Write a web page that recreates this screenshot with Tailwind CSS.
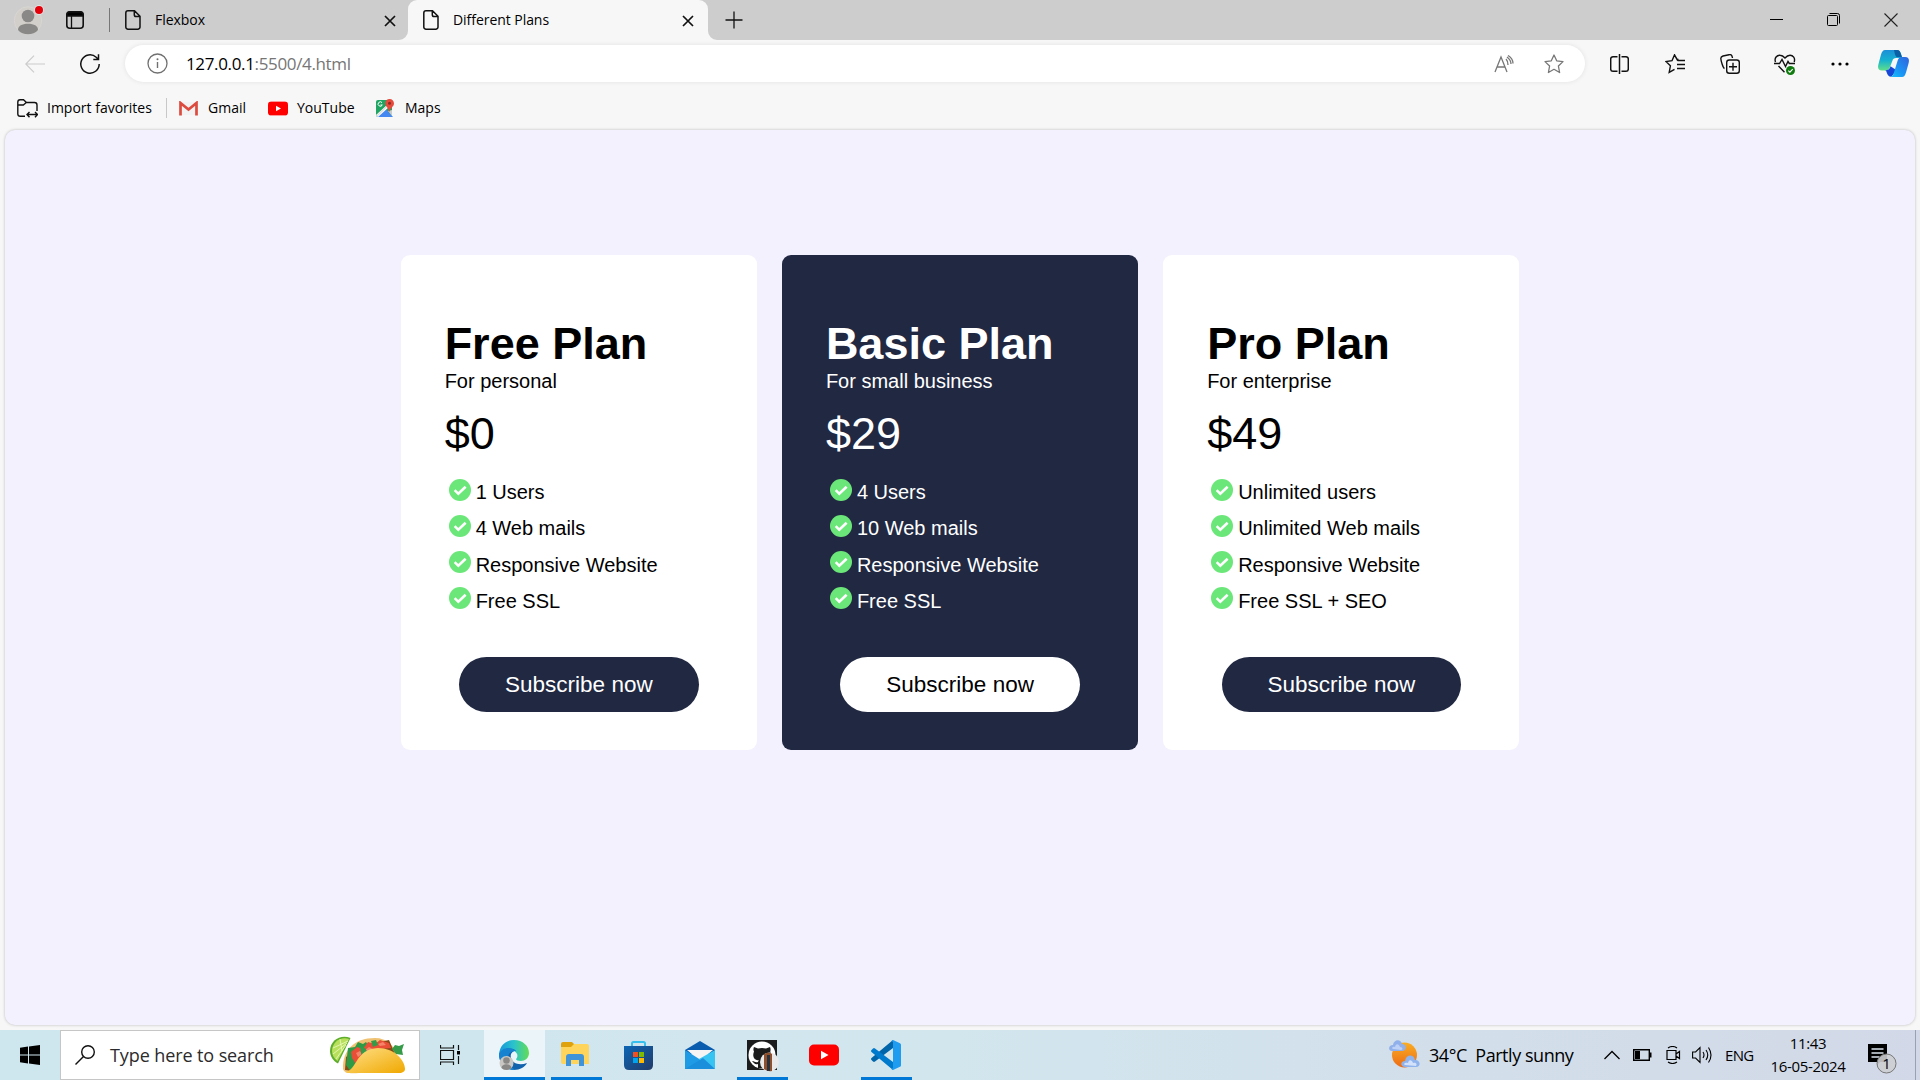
<!DOCTYPE html>
<html lang="en">
<head>
<meta charset="utf-8">
<title>Different Plans</title>
<script src="https://cdn.jsdelivr.net/npm/@tailwindcss/browser@4"></script>
</head>
<body class="w-[1920px] h-[1080px] overflow-hidden flex flex-col bg-[#f7f7f7] text-black font-['Open_Sans',sans-serif]">
<svg class="hidden">
  <symbol id="page" viewBox="0 0 16 20"><path d="M3 .8h6.5L15 6.3V17a2.200 2.200 0 0 1-2.200 2.200H3A2.200 2.200 0 0 1 .8 17V3A2.200 2.200 0 0 1 3 .8zM9.300 1v3.700a1.800 1.800 0 0 0 1.800 1.800H15" fill="none" stroke="#111" stroke-width="1.500"/></symbol>
  <symbol id="x" viewBox="0 0 12 12"><path d="M1 1l10 10M11 1L1 11" stroke="#111" stroke-width="1.700" fill="none"/></symbol>
  <symbol id="yt" viewBox="0 0 30 22"><rect y=".5" width="30" height="21" rx="5" fill="#f00"/><path d="M12 6.800v8.400l7.500-4.200z" fill="#fff"/></symbol>
  <symbol id="check" viewBox="0 0 22 22"><circle cx="11" cy="11" r="11" fill="#6be779"/><path d="M5.700 11.200l3.600 3.600 7.300-7" fill="none" stroke="#fff" stroke-width="2.600"/></symbol>
</svg>

<!-- Tab strip -->
<header class="h-10 shrink-0 flex items-center bg-[#cdcdcd] text-[14px]">
  <svg class="ml-3.5 w-[30px] h-[30px]" viewBox="0 0 30 30"><circle cx="14" cy="15.500" r="13.700" fill="#d2cfca" stroke="#dedcd8" stroke-width=".6"/><circle cx="14" cy="11" r="6.300" fill="#8a8886"/><path d="M4 25c0-4 4-6.200 10-6.200S24 21 24 25c-2.500 3-6 4.200-10 4.200S6.500 28 4 25z" fill="#8a8886"/><circle cx="25" cy="5" r="4.800" fill="#e8e8e8"/><circle cx="25" cy="5" r="4" fill="#e3000b"/></svg>
  <svg class="ml-[22px] w-[18px] h-[18px]" viewBox="0 0 18 18"><rect x=".8" y=".8" width="16.400" height="16.400" rx="3" fill="none" stroke="#111" stroke-width="1.600"/><path d="M1 5V3.500A2.500 2.500 0 0 1 3.500 1h11A2.500 2.500 0 0 1 17 3.500V5zM5.500 5v12" stroke="#111" stroke-width="1.300"/></svg>
  <div class="ml-[25px] w-px h-6 bg-[#777]"></div>
  <div class="ml-[15px] w-[283px] flex items-center">
    <svg class="w-4 h-5"><use href="#page"/></svg>
    <span class="ml-[14px] pb-0.5 tracking-[-0.05px]">Flexbox</span>
    <svg class="ml-auto mr-[12px] w-3 h-3 translate-y-px"><use href="#x"/></svg>
  </div>
  <div class="relative w-[300px] h-10 bg-[#f7f7f7] rounded-t-[9px] flex items-center">
    <svg class="absolute -left-[9px] bottom-0 w-[9px] h-[9px]" viewBox="0 0 9 9"><path d="M9 0v9H0A9 9 0 0 0 9 0z" fill="#f7f7f7"/></svg>
    <svg class="absolute -right-[9px] bottom-0 w-[9px] h-[9px]" viewBox="0 0 9 9"><path d="M0 0v9h9A9 9 0 0 1 0 0z" fill="#f7f7f7"/></svg>
    <svg class="ml-[15px] w-4 h-5"><use href="#page"/></svg>
    <span class="ml-[14px] pb-0.5 tracking-[-0.05px]">Different Plans</span>
    <svg class="ml-auto mr-[14px] w-3 h-3 translate-y-px"><use href="#x"/></svg>
  </div>
  <svg class="ml-[17px] w-[18px] h-[18px]" viewBox="0 0 18 18"><path d="M9 .5v17M.5 9h17" stroke="#111" stroke-width="1.300"/></svg>
  <div class="ml-auto mr-[22px] pb-px flex items-center gap-11">
    <svg class="w-[13px] h-[13px]" viewBox="0 0 13 13"><path d="M0 6.500h13" stroke="#000"/></svg>
    <svg class="w-[13px] h-[13px]" viewBox="0 0 13 13"><rect x=".5" y="2.500" width="10" height="10" rx="1" fill="none" stroke="#000"/><path d="M2.500 .5h8a2 2 0 0 1 2 2v8" fill="none" stroke="#000"/></svg>
    <svg class="w-[14px] h-[14px]" viewBox="0 0 14 14"><path d="M.5 .5l13 13M13.500 .5l-13 13" stroke="#222" stroke-width="1.100"/></svg>
  </div>
</header>

<!-- Address bar -->
<div class="h-[47px] shrink-0 flex items-center">
  <svg class="ml-[25px] w-5 h-[18px]" viewBox="0 0 20 18"><path d="M20 9H1M9 .700L.8 9l8.200 8.300" fill="none" stroke="#ccc" stroke-width="1.200"/></svg>
  <svg class="ml-[35px] w-5 h-5" viewBox="0 0 20 20"><path d="M19.200 10A9.200 9.200 0 1 1 16.200 3.200L18.300 5.300M18.500 .3V5.500H13.300" fill="none" stroke="#111" stroke-width="1.500"/></svg>
  <div class="ml-[25px] w-[1460px] h-[37px] rounded-full bg-white shadow-[0_0_5px_rgba(0,0,0,0.09)] flex items-center">
    <svg class="ml-[22px] w-[21px] h-[21px]" viewBox="0 0 21 21"><circle cx="10.500" cy="10.500" r="9.500" fill="none" stroke="#707070" stroke-width="1.300"/><path d="M10.500 9v6" stroke="#707070" stroke-width="1.400"/><circle cx="10.500" cy="6.300" r="1" fill="#707070"/></svg>
    <span class="ml-[18px] text-[17px] tracking-[-0.35px] text-[#767676]"><span class="text-black">127.0.0.1</span>:5500/4.html</span>
    <svg class="ml-auto w-5 h-[18px]" viewBox="0 0 20 18"><path d="M1 17L7 2l6 15M3 12h8M12 4q2 2 2 6M13 2q4 3 4 7M14 .5q5 3 5 8" fill="none" stroke="#777" stroke-width="1.300"/></svg>
    <svg class="ml-[30px] mr-[21px] w-5 h-5" viewBox="0 0 20 20"><path d="M10 1l2.700 5.800 6.300.8-4.600 4.400 1.200 6.500L10 15.300l-5.600 3.200L5.600 12 1 7.600l6.300-.8z" fill="none" stroke="#777" stroke-width="1.300" stroke-linejoin="round"/></svg>
  </div>
  <svg class="ml-[25px] w-[19px] h-5" viewBox="0 0 19 20"><path d="M7.500 2.700H3A2.300 2.300 0 0 0 .7 5v10A2.300 2.300 0 0 0 3 17.300h4.500M11.500 2.700H16A2.300 2.300 0 0 1 18.300 5v10a2.300 2.300 0 0 1-2.300 2.300h-4.500M9.500 0v20" fill="none" stroke="#111" stroke-width="1.500"/></svg>
  <svg class="ml-[36px] w-5 h-5" viewBox="0 0 20 20"><path d="M13.500 5.500L12 5.200 9.500 .9 7 6.700 .9 7.500l4.500 4.300-1.200 6.500 5.300-3M9.500 .9l3.200 5.800M12.500 6.500h7.500M12 10.500h8M12 14.500h8" fill="none" stroke="#111" stroke-width="1.400"/></svg>
  <svg class="ml-[35px] w-5 h-5" viewBox="0 0 20 20"><rect x="6.700" y="6" width="12.600" height="13.200" rx="2.500" fill="none" stroke="#111" stroke-width="1.400"/><path d="M13 8.700v8M9 12.700h8M4.500 14.500C3 14 1 7 .8 4.500.8 3 1.500 2.500 3 2L9 .7C11 .3 12 1 12.500 4" fill="none" stroke="#111" stroke-width="1.400"/></svg>
  <svg class="ml-[34px] w-[22px] h-[21px] translate-y-px" viewBox="0 0 22 21"><path d="M1.500 8C0 4 3 1 6 1.200c2 0 3.500 1 5 2.800 1.500-1.800 3-2.800 5-2.800 3 0 5.500 2.800 4.200 6.800M0 9.500h5.500L8 5.500l3.500 7 2.500-5 1.300 2H21M4.500 12l6 6.300" fill="none" stroke="#111" stroke-width="1.400"/><circle cx="16.500" cy="16.500" r="4.500" fill="#107c10"/><path d="M14.300 16.600l1.600 1.500 2.800-3" fill="none" stroke="#fff" stroke-width="1.100"/></svg>
  <svg class="ml-[35px] w-[18px] h-5" viewBox="0 0 18 20"><circle cx="2" cy="10" r="1.600"/><circle cx="9" cy="10" r="1.600"/><circle cx="16" cy="10" r="1.600"/></svg>
  <svg class="ml-[29px] w-[31px] h-[27px]" viewBox="0 0 31 27"><defs><linearGradient id="c1" x1="0" y1="0" x2="0" y2="1"><stop stop-color="#1c8fd8"/><stop offset=".5" stop-color="#16b1cf"/><stop offset="1" stop-color="#5fdf8a"/></linearGradient><linearGradient id="c2" x1="1" y1="0" x2="0" y2="1"><stop stop-color="#2f63dc"/><stop offset=".6" stop-color="#1a96f5"/><stop offset="1" stop-color="#18c2fa"/></linearGradient></defs><path d="M7 0h12c2.500 0 3 1.500 4 4l1 4h-6c-2 0-3 .8-3.700 3L12 17c-.8 2.500-2 3.500-4 3.500H4c-4 0-4.500-3-3.500-6.500L3 4.500C4 1.500 5 0 7 0z" fill="url(#c1)"/><path d="M16 0h3c2.500 0 3 1.500 4 4l1 3h-5c-2-.5-2.500-5-3-7z" fill="#0b5fa5"/><path d="M7 20.300c3.500 0 4.500-1 5.500-4l6 4-5 6.500c-3 0-4-2-4.700-4-.4-1.300-.8-2.500-1.800-2.500z" fill="#1747d6"/><path d="M24 27H12c2 0 3-1.500 3.800-4l3.700-12c.8-2.600 2-4 4.500-4h3c4 0 4.500 3 3.500 6.500L28 22.500C27 25.500 26 27 24 27z" fill="url(#c2)"/></svg>
</div>

<!-- Bookmarks bar -->
<nav class="h-[43px] pb-px shrink-0 flex items-center text-[14px]">
  <svg class="ml-[17px] w-[21px] h-[19px]" viewBox="0 0 21 19"><path d="M8 17.300H3.200A2.400 2.400 0 0 1 .8 15V3A2.300 2.300 0 0 1 3 .8h3.500L9.500 3.500H17.500A2.500 2.500 0 0 1 20 6v6M.8 6h5.500l3-2.500M10 15.500h10.500M12.500 13L10 15.500l2.500 2.700M18 13l2.500 2.500L18 18.200" fill="none" stroke="#111" stroke-width="1.400"/></svg>
  <span class="ml-[9px] w-[106px] pb-0.5 whitespace-nowrap">Import favorites</span>
  <div class="ml-[13px] w-px h-5 bg-[#c8c8c8]"></div>
  <svg class="ml-[12px] w-[19px] h-[15px]" viewBox="0 0 19 15"><path d="M1 1h17v13H1z" fill="#f2f2f2"/><path d="M1.500 14.500V2l8 6.500L17.500 2v12.500" fill="none" stroke="#dd4b3e" stroke-width="2.700"/></svg>
  <span class="ml-[10px] w-[40px] pb-0.5 whitespace-nowrap">Gmail</span>
  <svg class="ml-[20px] w-5 h-[15px]" viewBox="0 0 30 22"><use href="#yt"/></svg>
  <span class="ml-[9px] w-[58px] pb-0.5 whitespace-nowrap">YouTube</span>
  <svg class="ml-[21px] w-[19px] h-[18px]" viewBox="0 0 19 18"><rect y="1" width="16" height="17" rx="2" fill="#1fa463"/><path d="M1 18L9 9l8 9z" fill="#4688f1"/><path d="M0 16L11 6l2 2L2 18z" fill="#fff"/><path d="M0 17l1 1L12 7l-1-1z" fill="#ddd"/><path d="M16 11v6l-4-5z" fill="#ccc"/><path d="M13.500 0a4.200 4.200 0 0 0-4.200 4.400c0 3 3 3.600 4.200 8.600 1.200-5 4.500-5.600 4.500-8.600A4.400 4.400 0 0 0 13.500 0z" fill="#e64a3c"/><circle cx="13.500" cy="4.300" r="1.500" fill="#8c2a20"/><path d="M6 3.600a2.200 2.200 0 1 0 .3 2.400H4.500" fill="none" stroke="#fff" stroke-width="1"/></svg>
  <span class="ml-[10px] pb-0.5">Maps</span>
</nav>

<!-- Plans page -->
<main class="mx-[5px] h-[895px] shrink-0 rounded-[10px] bg-[#f3f1fd] shadow-[0_0_3px_rgba(0,0,0,0.25)] flex justify-center items-start gap-[25px] pt-[125px] font-['Liberation_Sans',Arial,sans-serif] text-[20px]">
  <section class="w-[356.25px] h-[495px] rounded-[9px] bg-white pl-[44px] pt-[63px]">
    <h1 class="text-[45px] leading-[52px] font-bold whitespace-nowrap">Free Plan</h1>
    <p class="leading-[23px]">For personal</p>
    <p class="text-[45px] leading-[52px] mt-[15px]">$0</p>
    <ul class="mt-[13px] ml-[4.250px]">
      <li class="h-[36.25px] flex items-start"><svg class="mt-[5.500px] mr-[4.750px] size-[22px]"><use href="#check"/></svg><span class="leading-[23px] mt-2">1 Users</span></li>
      <li class="h-[36.25px] flex items-start"><svg class="mt-[5.500px] mr-[4.750px] size-[22px]"><use href="#check"/></svg><span class="leading-[23px] mt-2">4 Web mails</span></li>
      <li class="h-[36.25px] flex items-start"><svg class="mt-[5.500px] mr-[4.750px] size-[22px]"><use href="#check"/></svg><span class="leading-[23px] mt-2">Responsive Website</span></li>
      <li class="h-[36.25px] flex items-start"><svg class="mt-[5.500px] mr-[4.750px] size-[22px]"><use href="#check"/></svg><span class="leading-[23px] mt-2">Free SSL</span></li>
    </ul>
    <button class="mt-[39px] ml-[14.500px] w-[239.500px] h-[55px] rounded-full bg-[#212842] text-white text-[22.500px]">Subscribe now</button>
  </section>
  <section class="w-[356.25px] h-[495px] rounded-[9px] bg-[#212842] text-white pl-[44px] pt-[63px]">
    <h1 class="text-[45px] leading-[52px] font-bold whitespace-nowrap">Basic Plan</h1>
    <p class="leading-[23px]">For small business</p>
    <p class="text-[45px] leading-[52px] mt-[15px]">$29</p>
    <ul class="mt-[13px] ml-[4.250px]">
      <li class="h-[36.25px] flex items-start"><svg class="mt-[5.500px] mr-[4.750px] size-[22px]"><use href="#check"/></svg><span class="leading-[23px] mt-2">4 Users</span></li>
      <li class="h-[36.25px] flex items-start"><svg class="mt-[5.500px] mr-[4.750px] size-[22px]"><use href="#check"/></svg><span class="leading-[23px] mt-2">10 Web mails</span></li>
      <li class="h-[36.25px] flex items-start"><svg class="mt-[5.500px] mr-[4.750px] size-[22px]"><use href="#check"/></svg><span class="leading-[23px] mt-2">Responsive Website</span></li>
      <li class="h-[36.25px] flex items-start"><svg class="mt-[5.500px] mr-[4.750px] size-[22px]"><use href="#check"/></svg><span class="leading-[23px] mt-2">Free SSL</span></li>
    </ul>
    <button class="mt-[39px] ml-[14.500px] w-[239.500px] h-[55px] rounded-full bg-white text-black text-[22.500px]">Subscribe now</button>
  </section>
  <section class="w-[356.25px] h-[495px] rounded-[9px] bg-white pl-[44px] pt-[63px]">
    <h1 class="text-[45px] leading-[52px] font-bold whitespace-nowrap">Pro Plan</h1>
    <p class="leading-[23px]">For enterprise</p>
    <p class="text-[45px] leading-[52px] mt-[15px]">$49</p>
    <ul class="mt-[13px] ml-[4.250px]">
      <li class="h-[36.25px] flex items-start"><svg class="mt-[5.500px] mr-[4.750px] size-[22px]"><use href="#check"/></svg><span class="leading-[23px] mt-2">Unlimited users</span></li>
      <li class="h-[36.25px] flex items-start"><svg class="mt-[5.500px] mr-[4.750px] size-[22px]"><use href="#check"/></svg><span class="leading-[23px] mt-2">Unlimited Web mails</span></li>
      <li class="h-[36.25px] flex items-start"><svg class="mt-[5.500px] mr-[4.750px] size-[22px]"><use href="#check"/></svg><span class="leading-[23px] mt-2">Responsive Website</span></li>
      <li class="h-[36.25px] flex items-start"><svg class="mt-[5.500px] mr-[4.750px] size-[22px]"><use href="#check"/></svg><span class="leading-[23px] mt-2">Free SSL + SEO</span></li>
    </ul>
    <button class="mt-[39px] ml-[14.500px] w-[239.500px] h-[55px] rounded-full bg-[#212842] text-white text-[22.500px]">Subscribe now</button>
  </section>
</main>

<!-- Taskbar -->
<footer class="mt-[5px] h-[50px] shrink-0 flex items-center bg-linear-to-r from-[#cee6ee] via-[#d2e6ee] to-[#d2d8e7]">
  <div class="w-[60px] flex justify-center"><svg class="w-5 h-5" viewBox="0 0 20 20"><path d="M0 2.800L8 1.600v7.900H0zM9 1.400L20 0v9.500H9zM0 10.500h8v8L0 17.300zM9 10.500h11V20L9 18.600z"/></svg></div>
  <div class="w-[360px] h-[50px] bg-white border border-[#c6c6c6] flex items-center">
    <svg class="ml-[14px] w-5 h-5" viewBox="0 0 20 20"><circle cx="13" cy="7" r="6.300" fill="none" stroke="#111" stroke-width="1.400"/><path d="M8.500 11.500L.5 19.500" stroke="#111" stroke-width="1.400"/></svg>
    <span class="ml-[15px] text-[18px] tracking-[-0.1px] text-[#2b2b2b] whitespace-nowrap">Type here to search</span>
    <svg class="ml-auto mr-[14px] w-[76px] h-[38px]" viewBox="0 0 76 38"><defs><linearGradient id="sh" x1="0" y1="0" x2="1" y2="1"><stop stop-color="#ffe18b"/><stop offset="1" stop-color="#f0a800"/></linearGradient></defs><path d="M21.500 2C12-2 1 4 1 15c0 5 3 10 8 12.500z" fill="#5fae2b"/><path d="M20 3C12 0 3 6 3 15c0 4 2 7.500 5.500 10z" fill="#b9e05c"/><path d="M19 5L4 12M18 7L4 18M17 9L7 23M11 3l2 12" stroke="#eefbc4" stroke-width=".8"/><path d="M14 33C13 15 25 2 46 2c12 0 20 8 22 18L30 37c-9 1-15 0-16-4z" fill="#efc273"/><path d="M16 34l1-13L32 10 60 4l6 14-36 18z" fill="#8a4a16"/><path d="M19 12l7-1 3-5 5 2 3-2 3 4-3 8-6 9-9 9-5-7z" fill="#2f9a45"/><path d="M22 16l6-5 6 2 5-7 7 2 5-4 9 3 2 5-10 1-8 3-8 7-9 5-4-6z" fill="#e84f36"/><path d="M27 17l4-2 2 3-4 3zM36 14l4-3 4 2-5 4zM49 8l5-2 3 3-6 1z" fill="#f5846a"/><path d="M31 11l5 1 3 5-6 5zM42 5l5-1 2 5-5 2zM66 9l4 1 5-2-2 6 1 5-7-1-4-5z" fill="#359b48"/><path d="M16 36C28 35 26 13 49 12c16 0 27 12 27 21 0 2-2 4-6 4H24c-4 0-7 0-8-1z" fill="url(#sh)"/></svg>
  </div>
  <div class="w-[63px] pl-5"><svg class="w-5 h-5" viewBox="0 0 20 20"><path d="M.5 0v3h13V0M.5 20v-3h13v3M.5 5.500h13v9H.5zM18.500 0v5M18.500 11v8" fill="none" stroke="#111" stroke-width="1.200"/><path d="M17 6h3v3.500h-3z"/></svg></div>
  <div class="ml-px w-[61px] h-[50px] bg-[#ebf5f9] border-b-3 border-[#0078d7] flex items-center justify-center">
    <svg class="mr-px w-[30px] h-[30px] translate-y-px" viewBox="0 0 30 30"><defs><linearGradient id="eg" x1="0" x2="1"><stop stop-color="#1597db"/><stop offset=".5" stop-color="#2bc3cb"/><stop offset="1" stop-color="#63dd55"/></linearGradient></defs><path d="M0 14C1 5 7 0 15 0c9 0 15 6 15 13 0 5-4 8-8 8-3 0-5-1-5-2 1-1 2-3 1-5-2-5-12-7-18 0z" fill="url(#eg)"/><path d="M0 14c4-6 13-7 17-3-4 0-6 3-5 7 1 5 8 8 16 5-2 4-7 7-13 7C6 30 0 23 0 14z" fill="#1263ad"/><path d="M0 14c3-7 12-8 17-3-6 0-9 4-8 9 1 4 3 7 7 10C7 30 0 23 0 14z" fill="#1783d0"/><circle cx="7.500" cy="23" r="7" fill="#c9c7c4"/><circle cx="7.500" cy="20.500" r="3.300" fill="#8a8886"/><path d="M2.500 28c0-5 10-5 10 0-2 2.500-8 2.500-10 0z" fill="#8a8886"/></svg>
  </div>
  <div class="ml-[6px] mr-[5px] w-[51px] h-[50px] border-b-3 border-[#0078d7] flex items-center justify-center">
    <svg class="mr-1 w-7 h-6" viewBox="0 0 28 24"><path d="M0 2q0-2 2-2h9l3 3-3 4H0z" fill="#e0a20c"/><path d="M0 5h10l3-3h13q2 0 2 2v18H2q-2 0-2-2z" fill="#ffd45b"/><path d="M5 24v-9q0-3 3-3h12q3 0 3 3v9h-5v-6h-8v6z" fill="#3f93d8"/></svg>
  </div>
  <div class="w-[62px] h-[50px] flex items-center justify-center">
    <svg class="w-[29px] h-[29px]" viewBox="0 0 29 29"><defs><linearGradient id="st" x1="0" y1="0" x2="1" y2="1"><stop stop-color="#0b66b5"/><stop offset="1" stop-color="#233b68"/></linearGradient></defs><path d="M8 6V2.500Q8 1 9.500 1h10Q21 1 21 2.500V6" fill="none" stroke="#35c0ee" stroke-width="2"/><path d="M0 5h29v19q0 5-5 5H5q-5 0-5-5z" fill="url(#st)"/><path d="M9 11h5v5H9z" fill="#f25022"/><path d="M15 11h5v5h-5z" fill="#7fba00"/><path d="M9 17h5v5H9z" fill="#00a4ef"/><path d="M15 17h5v5h-5z" fill="#ffb900"/></svg>
  </div>
  <div class="w-[62px] h-[50px] flex items-center justify-center">
    <svg class="w-[30px] h-7" viewBox="0 0 30 28"><path d="M0 9L15 0l15 9v4H0z" fill="#0a5cae"/><path d="M2 9h26L15 20z" fill="#f4f4f4"/><path d="M0 9l30 19H0z" fill="#1f9be6"/><path d="M30 9v19L14 18z" fill="#38c4f3"/><path d="M0 28L18 17l12 11z" fill="#1a8fdc"/></svg>
  </div>
  <div class="mx-[5.500px] w-[51px] h-[50px] border-b-3 border-[#0078d7] flex items-center justify-center">
    <svg class="ml-0.5 w-8 h-8 translate-y-0.5" viewBox="0 0 32 32"><path d="M0 0h30v30H0z" fill="#1c1c1c"/><circle cx="15" cy="15" r="13.500" fill="#fff"/><path d="M7 7l4 1.500q4-1 8 0L23 7q1 2 .3 4.500C26 18 22 20 18 20.500q1 1 1 3V28h-8v-4c-3 1-4-1-6-3 3 0 3 2 6 1q0-1 1-1.500C7 20 5 17 7 11.500 6 10 6.500 8 7 7z" fill="#1c1c1c"/><circle cx="22.500" cy="22" r="9.500" fill="#e9e9e9"/><path d="M17 14q5-3 8 0v17q-4 1-8-2z" fill="#8f502d"/><path d="M20 15h3v16h-3z" fill="#26323e"/></svg>
  </div>
  <div class="w-[62px] h-[50px] flex items-center justify-center"><svg class="w-[30px] h-[22px]"><use href="#yt"/></svg></div>
  <div class="mx-[5.500px] w-[51px] h-[50px] border-b-3 border-[#0078d7] flex items-center justify-center">
    <svg class="w-[30px] h-[30px] translate-y-px" viewBox="0 0 30 30"><path d="M22 0v8L4 21.500q-1 .8-2 0L.5 20q-1-1 0-2z" fill="#0065a9"/><path d="M22 30v-8L4 8.500q-1-.8-2 0L.5 10q-1 1 0 2z" fill="#007acc"/><path d="M22 0l7 3.200q1 .5 1 1.600v20.400q0 1.100-1 1.600L22 30q-1 0-1.500-1l1.500-1V2l-1.500-1q.5-1 1.500-1z" fill="#1f9cf0"/></svg>
  </div>
  <svg class="ml-auto w-[31px] h-[30px] -translate-y-px" viewBox="0 0 31 30"><defs><linearGradient id="sun" x1="0" y1="0" x2="0" y2="1"><stop stop-color="#f9ae24"/><stop offset="1" stop-color="#ee6a14"/></linearGradient></defs><circle cx="15.500" cy="16" r="12.500" fill="url(#sun)"/><path d="M3 12c-4 0-4-6 1-6 1-6 8-6 9-1 5 0 5 7 0 7z" fill="#8fb0ea"/><path d="M4 10c-2-1 0-3 2-2 1-4 4-3 5 0 3 0 3 3 1 3z" fill="#bdd0f6"/><path d="M16 28c-5 0-5-6 0-6 1-7 9-7 10-1 6 0 6 7 1 7z" fill="#8fb3ec"/><path d="M16 26c-2-1 0-3 3-2 1-4 4-3 5 0 4-1 4 2 3 3z" fill="#d3e1fa"/></svg>
  <span class="ml-[9px] w-[145px] whitespace-pre text-[18px] tracking-[-0.45px]">34°C  Partly sunny</span>
  <svg class="ml-[30px] w-4 h-2.5" viewBox="0 0 16 10"><path d="M.5 9L8 1.500 15.500 9" fill="none" stroke="#000" stroke-width="1.300"/></svg>
  <svg class="ml-[13px] w-[19px] h-3" viewBox="0 0 19 12"><path d="M.7 .7h15.600v10.600H.7z" fill="none" stroke="#000" stroke-width="1.400"/><path d="M2 2h5v8H2zM17 3.500h1.500v5H17z"/></svg>
  <svg class="ml-[14px] w-[15px] h-[18px]" viewBox="0 0 15 18"><path d="M1 4.500h9v9H1zM10 8l3.500-2.500v7L10 10M2 2q4.500-3 9 0M2 16q4.500 3 9 0" fill="none" stroke="#000" stroke-width="1.200"/></svg>
  <svg class="ml-[11px] w-5 h-[18px]" viewBox="0 0 20 18"><path d="M.6 6v6h3L8 16.500v-15L3.600 6zM11 6q2 3 0 6M14 4q3.500 5 0 10M16.500 1.500q5 7.500 0 15" fill="none" stroke="#000" stroke-width="1.100"/></svg>
  <span class="ml-[13px] w-[29px] text-[15px] tracking-[-0.65px] whitespace-nowrap">ENG</span>
  <div class="ml-[12px] w-[84px] flex flex-col items-center text-[15px] leading-[23px] tracking-[-0.35px] whitespace-nowrap"><span>11:43</span><span>16-05-2024</span></div>
  <svg class="ml-[18px] w-[30px] h-[30px] translate-y-1" viewBox="0 0 30 30"><path d="M0 0h19v18h-7l-3 3v-3H0z"/><path d="M3.500 5h12M3.500 9h12M3.500 13h8" stroke="#dce3ee" stroke-width="1.300"/><circle cx="18.500" cy="19.500" r="9.500" fill="#ccced2" fill-opacity=".9" stroke="#777"/><text x="18.500" y="25" text-anchor="middle" font-size="15">1</text></svg>
  <div class="ml-[17px] mr-1 w-px h-[50px] bg-[#98a2b0]"></div>
</footer>
</body>
</html>
